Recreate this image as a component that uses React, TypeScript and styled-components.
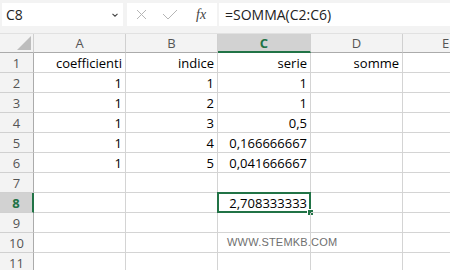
import { Fragment } from "react";
import styled, { createGlobalStyle, css } from "styled-components";

const GlobalStyle = createGlobalStyle`
  html, body {
    margin: 0;
    padding: 0;
    background: #ffffff;
    overflow: hidden;
  }
  body {
    font-family: "Open Sans", "Liberation Sans", sans-serif;
  }
`;

const Sheet = styled.div`
  width: 450px;
  height: 270px;
  position: relative;
  overflow: hidden;
  background: #ffffff;
`;

const FormulaBar = styled.div`
  height: 34px;
  box-sizing: border-box;
  background: #f3f3f3;
  display: flex;
  align-items: flex-start;
  padding: 3px 0 0 2px;
  gap: 4px;
  border-bottom: 1px solid #e1e1e1;
`;

const NameBox = styled.div`
  width: 121px;
  height: 23px;
  box-sizing: border-box;
  background: #ffffff;
  display: flex;
  align-items: center;
  justify-content: space-between;
  padding: 0 4px 0 4px;
  font-size: 14px;
  color: #222222;
`;

const Buttons = styled.div`
  width: 90px;
  height: 23px;
  background: #ffffff;
  display: flex;
  align-items: center;
  padding-left: 9px;
  box-sizing: border-box;
  gap: 15px;
`;

const FormulaInput = styled.div`
  flex: 1;
  height: 23px;
  background: #ffffff;
  display: flex;
  align-items: center;
  padding-left: 6px;
  font-size: 14px;
  color: #222222;
  margin-left: -2px;
`;

const Fx = styled.span`
  font-family: "Liberation Serif", serif;
  font-style: italic;
  font-size: 14px;
  color: #444444;
  margin-left: 3px;
`;

const Grid = styled.div`
  display: grid;
  grid-template-columns: 34px 92px 92px 93px 92px 86px;
  grid-auto-rows: 20px;
  grid-template-rows: 19px;
`;

const Corner = styled.div`
  background: #f3f3f3;
  border-right: 1px solid #d0d0d0;
  border-bottom: 1px solid #ababab;
  box-sizing: border-box;
  position: relative;
  &::after {
    content: "";
    position: absolute;
    right: 2px;
    bottom: 2px;
    width: 0;
    height: 0;
    border-left: 14px solid transparent;
    border-bottom: 14px solid #bdbdbd;
  }
`;

const ColHead = styled.div<{ $active?: boolean }>`
  background: ${(p) => (p.$active ? "#d2d2d2" : "#f3f3f3")};
  border-right: 1px solid #d0d0d0;
  border-bottom: ${(p) => (p.$active ? "2px solid #217346" : "1px solid #ababab")};
  box-sizing: border-box;
  display: flex;
  align-items: center;
  justify-content: center;
  font-size: 13px;
  color: ${(p) => (p.$active ? "#217346" : "#555555")};
  font-weight: ${(p) => (p.$active ? 700 : 400)};
`;

const RowHead = styled.div<{ $active?: boolean }>`
  background: ${(p) => (p.$active ? "#d2d2d2" : "#f3f3f3")};
  border-right: ${(p) => (p.$active ? "2px solid #217346" : "1px solid #ababab")};
  border-bottom: 1px solid #d0d0d0;
  box-sizing: border-box;
  display: flex;
  align-items: center;
  justify-content: center;
  font-size: 13px;
  color: ${(p) => (p.$active ? "#217346" : "#555555")};
  font-weight: ${(p) => (p.$active ? 700 : 400)};
`;

const Cell = styled.div<{ $selected?: boolean }>`
  border-right: 1px solid #d4d4d4;
  border-bottom: 1px solid #d4d4d4;
  box-sizing: border-box;
  display: flex;
  align-items: center;
  justify-content: flex-end;
  padding: 1px 3px 0 0;
  font-size: 13px;
  color: #000000;
  white-space: nowrap;
  position: relative;
  ${(p) =>
    p.$selected &&
    css`
      &::before {
        content: "";
        position: absolute;
        left: -1px;
        top: -1px;
        right: -1px;
        bottom: -1px;
        border: 2px solid #217346;
      }
      &::after {
        content: "";
        position: absolute;
        right: -4px;
        bottom: -4px;
        width: 5px;
        height: 5px;
        background: #217346;
        border: 1px solid #ffffff;
      }
    `}
`;

const Watermark = styled.div`
  position: absolute;
  left: 227px;
  top: 236px;
  font-family: "Liberation Sans", sans-serif;
  font-size: 11px;
  letter-spacing: 0.2px;
  color: #6f6f6f;
`;

const columns = ["A", "B", "C", "D", "E"];

const rows: string[][] = [
  ["coefficienti", "indice", "serie", "somme", ""],
  ["1", "1", "1", "", ""],
  ["1", "2", "1", "", ""],
  ["1", "3", "0,5", "", ""],
  ["1", "4", "0,166666667", "", ""],
  ["1", "5", "0,041666667", "", ""],
  ["", "", "", "", ""],
  ["", "", "2,708333333", "", ""],
  ["", "", "", "", ""],
  ["", "", "", "", ""],
  ["", "", "", "", ""],
];

function Chevron() {
  return (
    <svg width="8" height="6" viewBox="0 0 8 6">
      <path d="M1.5 1.8 L4 4.2 L6.5 1.8" stroke="#444" strokeWidth="1.1" fill="none" />
    </svg>
  );
}

function App() {
  return (
    <Sheet>
      <GlobalStyle />
      <FormulaBar>
        <NameBox>
          <span>C8</span>
          <Chevron />
        </NameBox>
        <Buttons>
          <svg width="11" height="11" viewBox="0 0 11 11">
            <path d="M1 1 L10 10 M10 1 L1 10" stroke="#b5b5b5" strokeWidth="1" fill="none" />
          </svg>
          <svg width="16" height="11" viewBox="0 0 16 11">
            <path d="M1 5 L6 10 L15 1" stroke="#b5b5b5" strokeWidth="1" fill="none" />
          </svg>
          <Fx>fx</Fx>
        </Buttons>
        <FormulaInput>=SOMMA(C2:C6)</FormulaInput>
      </FormulaBar>
      <Grid>
        <Corner />
        {columns.map((c) => (
          <ColHead key={c} $active={c === "C"}>
            {c}
          </ColHead>
        ))}
        {rows.map((r, i) => (
          <Fragment key={i}>
            <RowHead $active={i === 7}>{i + 1}</RowHead>
            {r.map((v, j) => (
              <Cell key={j} $selected={i === 7 && j === 2}>
                {v}
              </Cell>
            ))}
          </Fragment>
        ))}
      </Grid>
      <Watermark>WWW.STEMKB.COM</Watermark>
    </Sheet>
  );
}

export default App;
